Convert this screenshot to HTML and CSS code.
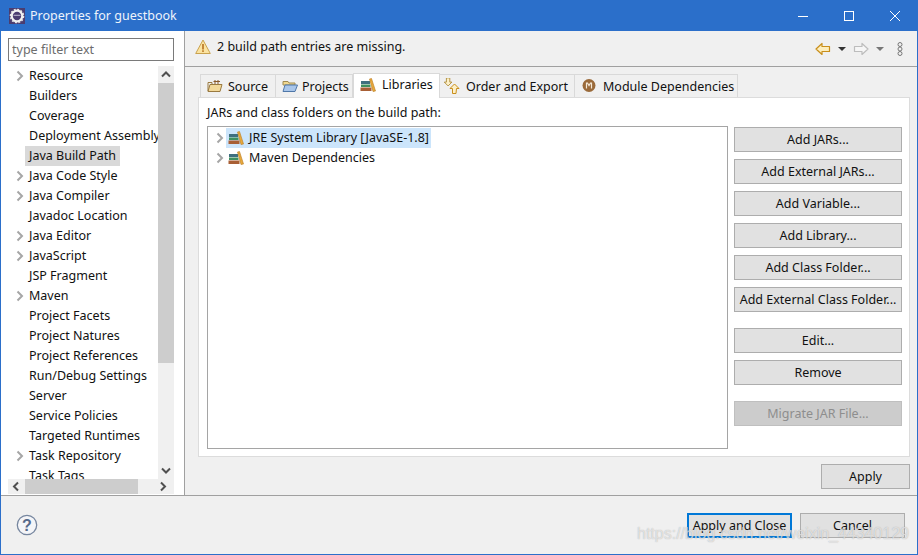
FILE: index.html
```html
<!DOCTYPE html>
<html>
<head>
<meta charset="utf-8">
<title>Properties for guestbook</title>
<link rel="stylesheet" href="styles.css">
</head>
<body>
<svg class="defs" width="0" height="0">
  <symbol id="lib" viewBox="0 0 16 16">
    <rect x="1" y="4" width="9" height="3" fill="#3f6f7f"/>
    <rect x="1" y="7.500" width="9.500" height="2.500" fill="#3f8f5f"/>
    <rect x="0.5" y="10.500" width="11" height="3.500" fill="#a85f35"/>
    <path d="M9.500 2 L11.500 1.500 L15.500 14 L13 14.500 Z" fill="#e8a93c" stroke="#b97a20" stroke-width=".6"/>
  </symbol>
  <symbol id="chev" viewBox="0 0 8 12">
    <path d="M1.500 1.500 L6 6 L1.500 10.500" fill="none" stroke="#a6a6a6" stroke-width="2"/>
  </symbol>
</svg>
<div class="window">
  <header class="titlebar">
    <svg class="appicon" viewBox="0 0 16 16" width="16" height="16">
      <rect width="16" height="16" fill="#4a3d70"/>
      <circle cx="8" cy="8" r="5.300" fill="none" stroke="#f2f2f2" stroke-width="2.200"/>
      <circle cx="8" cy="8" r="6.600" fill="none" stroke="#e8e8e8" stroke-width="1.400" stroke-dasharray="2 1.450"/>
      <rect x="4.500" y="6.800" width="7" height="1" fill="#bfb8d0"/>
    </svg>
    <span class="title">Properties for guestbook</span>
    <div class="winctrls">
      <svg viewBox="0 0 46 30" width="46" height="30"><path d="M18 15.500 H28" stroke="#fff" stroke-width="1"/></svg>
      <svg viewBox="0 0 46 30" width="46" height="30"><rect x="18.500" y="10.500" width="9" height="9" fill="none" stroke="#fff"/></svg>
      <svg viewBox="0 0 46 30" width="46" height="30"><path d="M18 10 L28 20 M28 10 L18 20" stroke="#fff" stroke-width="1"/></svg>
    </div>
  </header>

  <div class="main">
    <aside class="sidebar">
      <input class="filter" type="text" placeholder="type filter text">
      <div class="treegrid">
        <ul class="navtree">
          <li><svg class="chev"><use href="#chev"/></svg><span>Resource</span></li>
          <li class="leaf"><span>Builders</span></li>
          <li class="leaf"><span>Coverage</span></li>
          <li class="leaf"><span>Deployment Assembly</span></li>
          <li class="leaf selected"><span>Java Build Path</span></li>
          <li><svg class="chev"><use href="#chev"/></svg><span>Java Code Style</span></li>
          <li><svg class="chev"><use href="#chev"/></svg><span>Java Compiler</span></li>
          <li class="leaf"><span>Javadoc Location</span></li>
          <li><svg class="chev"><use href="#chev"/></svg><span>Java Editor</span></li>
          <li><svg class="chev"><use href="#chev"/></svg><span>JavaScript</span></li>
          <li class="leaf"><span>JSP Fragment</span></li>
          <li><svg class="chev"><use href="#chev"/></svg><span>Maven</span></li>
          <li class="leaf"><span>Project Facets</span></li>
          <li class="leaf"><span>Project Natures</span></li>
          <li class="leaf"><span>Project References</span></li>
          <li class="leaf"><span>Run/Debug Settings</span></li>
          <li class="leaf"><span>Server</span></li>
          <li class="leaf"><span>Service Policies</span></li>
          <li class="leaf"><span>Targeted Runtimes</span></li>
          <li><svg class="chev"><use href="#chev"/></svg><span>Task Repository</span></li>
          <li class="leaf"><span>Task Tags</span></li>
        </ul>
        <div class="vscroll">
          <svg class="arrow" viewBox="0 0 16 17" width="16" height="17"><path d="M4 10.500 L8 6.500 L12 10.500" fill="none" stroke="#505050" stroke-width="2"/></svg>
          <div class="vthumb"></div>
          <div class="grow"></div>
          <svg class="arrow" viewBox="0 0 16 17" width="16" height="17"><path d="M4 6.500 L8 10.500 L12 6.500" fill="none" stroke="#505050" stroke-width="2"/></svg>
        </div>
        <div class="hscroll">
          <svg class="arrow" viewBox="0 0 17 15" width="17" height="15"><path d="M10 3.500 L6 7.500 L10 11.500" fill="none" stroke="#505050" stroke-width="2"/></svg>
          <div class="hthumb"></div>
          <div class="grow"></div>
          <svg class="arrow" viewBox="0 0 20 15" width="20" height="15"><path d="M7 3.500 L11 7.500 L7 11.500" fill="none" stroke="#505050" stroke-width="2"/></svg>
        </div>
      </div>
    </aside>

    <section class="content">
      <div class="msgbar">
        <svg class="warn" viewBox="0 0 16 16" width="16" height="16">
          <path d="M8 1 L15.300 14.500 H.7 Z" fill="#fbe3a0" stroke="#c9a24f" stroke-linejoin="round"/>
          <rect x="7.200" y="5" width="1.600" height="5.500" fill="#b5701e"/>
          <rect x="7.200" y="11.300" width="1.600" height="1.600" fill="#b5701e"/>
        </svg>
        <span class="msg">2 build path entries are missing.</span>
        <div class="navtools">
          <svg viewBox="0 0 16 14" width="16" height="14"><path d="M1 7 L7 1.500 V4.500 H14.500 V9.500 H7 V12.500 Z" fill="#fdeebd" stroke="#c98f1c" stroke-width="1.200" stroke-linejoin="round"/></svg>
          <svg class="drop" viewBox="0 0 8 4" width="8" height="4"><path d="M0 0 H8 L4 4 Z" fill="#333"/></svg>
          <svg viewBox="0 0 16 14" width="16" height="14"><path d="M15 7 L9 1.500 V4.500 H1.500 V9.500 H9 V12.500 Z" fill="#f6f6f6" stroke="#bdbdbd" stroke-width="1.200" stroke-linejoin="round"/></svg>
          <svg class="drop" viewBox="0 0 8 4" width="8" height="4"><path d="M0 0 H8 L4 4 Z" fill="#777"/></svg>
          <svg class="kebab" viewBox="0 0 6 14" width="6" height="14"><circle cx="3" cy="2.500" r="2" fill="none" stroke="#777"/><circle cx="3" cy="7" r="2" fill="none" stroke="#777"/><circle cx="3" cy="11.500" r="2" fill="none" stroke="#777"/></svg>
        </div>
      </div>

      <div class="pagebody">
        <nav class="tabs">
          <div class="tab t-source">
            <svg viewBox="0 0 16 16" width="16" height="16"><path d="M1 13.500 L3 6.500 H15 L13 13.500 Z" fill="#f3d99a" stroke="#9a7a40"/><path d="M1 13 V4.500 H5 V6" fill="none" stroke="#9a7a40"/><path d="M8 2 V6 M11 2 V6 M6.500 3.500 H13" stroke="#8a5a2a" fill="none"/></svg>
            <span>Source</span>
          </div>
          <div class="tab t-projects">
            <svg viewBox="0 0 16 16" width="16" height="16"><path d="M1 3.500 H6 L7 5 H13 V7 H1 Z" fill="#f0d890" stroke="#a08a50"/><path d="M1 13.500 L3 7 H15.500 L13 13.500 Z" fill="#a9c6ea" stroke="#4f77a8"/></svg>
            <span>Projects</span>
          </div>
          <div class="tab active t-libs">
            <svg viewBox="0 0 16 16" width="16" height="16"><use href="#lib"/></svg>
            <span>Libraries</span>
          </div>
          <div class="tab t-order">
            <svg viewBox="0 0 16 16" width="16" height="16"><path d="M4 1 H8 V6 H10.500 L6 10.500 1.500 6 H4 Z" fill="#fdf0c8" stroke="#a9852f" transform="translate(-1 -1) scale(.85)"/><path d="M12 15.500 H8.500 V10.500 H6 L10.500 6 15 10.500 H12.500 Z" fill="#fdf0c8" stroke="#c98f1c"/></svg>
            <span>Order and Export</span>
          </div>
          <div class="tab t-module">
            <svg viewBox="0 0 16 16" width="16" height="16"><circle cx="8" cy="7.500" r="6.500" fill="#9a6a3a"/><path d="M5.500 10.500 V5 H6.500 L8 7.500 9.500 5 H10.500 V10.500" fill="none" stroke="#f3e8d8" stroke-width="1.200"/></svg>
            <span>Module Dependencies</span>
          </div>
        </nav>
        <div class="panel">
          <div class="panel-label">JARs and class folders on the build path:</div>
          <div class="panel-row">
            <div class="libtree">
              <div class="librow">
                <svg class="chev"><use href="#chev"/></svg>
                <div class="libitem selected">
                  <svg viewBox="0 0 16 16" width="16" height="16"><use href="#lib"/></svg>
                  <span>JRE System Library [JavaSE-1.8]</span>
                </div>
              </div>
              <div class="librow">
                <svg class="chev"><use href="#chev"/></svg>
                <div class="libitem">
                  <svg viewBox="0 0 16 16" width="16" height="16"><use href="#lib"/></svg>
                  <span>Maven Dependencies</span>
                </div>
              </div>
            </div>
            <div class="btncol">
              <button class="btn">Add JARs...</button>
              <button class="btn">Add External JARs...</button>
              <button class="btn">Add Variable...</button>
              <button class="btn">Add Library...</button>
              <button class="btn">Add Class Folder...</button>
              <button class="btn">Add External Class Folder...</button>
              <button class="btn sep">Edit...</button>
              <button class="btn">Remove</button>
              <button class="btn sep disabled">Migrate JAR File...</button>
            </div>
          </div>
        </div>
        <div class="applyrow"><button class="btn apply">Apply</button></div>
      </div>
    </section>
  </div>

  <footer class="footer">
    <svg class="help" viewBox="0 0 22 22" width="22" height="22">
      <circle cx="11" cy="11" r="9.700" fill="#f4f5f8" stroke="#76869f" stroke-width="1.300"/>
      <text x="11" y="16.500" text-anchor="middle" class="helpq">?</text>
    </svg>
    <div class="footbtns">
      <button class="btn default">Apply and Close</button>
      <button class="btn cancel">Cancel</button>
    </div>
  </footer>
  <div class="watermark">https://blog.csdn.net/weixin_44340129</div>
</div>
</body>
</html>
```

FILE: styles.css
```css
* { box-sizing: border-box; }
html, body { margin: 0; padding: 0; }
body { width: 918px; height: 555px; overflow: hidden; font-family: "Noto Sans", "Open Sans", sans-serif; font-size: 12.5px; color: #111; }
.defs { position: absolute; }
.window { position: relative; width: 918px; height: 555px; display: flex; flex-direction: column; border: 1px solid #2b6fca; border-top: 0; background: #f0f0f0; }
.titlebar { height: 31px; margin: 0 -1px; padding-left: 9px; display: flex; align-items: center; background: #2b6fca; color: #fff; flex: none; }
.appicon { flex: none; }
.title { margin-left: 5px; font-size: 12.5px; color: #eef3fb; }
.winctrls { margin-left: auto; display: flex; }
.main { flex: 1; min-height: 0; display: flex; border-bottom: 1px solid #a0a0a0; }
.sidebar { width: 184px; flex: none; background: #fff; border-right: 1px solid #a0a0a0; padding: 7px 0 0 7px; }
.filter { display: block; width: 166px; height: 23px; border: 1px solid #7a7a7a; padding: 0 3px; font: inherit; color: #666; outline: 0; background: #fff; }
.filter::placeholder { color: #6d6d6d; opacity: 1; }
.treegrid { margin-top: 5px; display: grid; grid-template-columns: 150px 16px; grid-template-rows: 413px 15px; }
.navtree { margin: 0; padding: 0; list-style: none; overflow: hidden; }
.navtree li { height: 20px; display: flex; align-items: center; white-space: nowrap; }
.navtree .chev { margin-right: 1px; }
.chev { width: 8px; height: 12px; margin-left: 8px; flex: none; }
.navtree .leaf { padding-left: 17px; }
.navtree li span { padding: 0 4px; line-height: 20px; position: relative; top: -0.5px; }
.navtree .selected span { background: #d9d9d9; top: 0; }
.vscroll { display: flex; flex-direction: column; background: #f0f0f0; }
.vthumb { height: 280px; background: #cdcdcd; }
.grow { flex: 1; }
.arrow { flex: none; display: block; }
.hscroll { display: flex; background: #f0f0f0; grid-column: 1 / 3; }
.hthumb { width: 113px; background: #cdcdcd; }
.content { flex: 1; min-width: 0; display: flex; flex-direction: column; }
.msgbar { height: 36px; flex: none; border-bottom: 1px solid #a0a0a0; display: flex; align-items: center; padding-left: 10px; }
.msg { margin-left: 6px; position: relative; top: -2px; }
.warn { position: relative; top: -2px; }
.navtools { margin-left: auto; margin-right: 14px; display: flex; align-items: center; gap: 7px; }
.kebab { margin-left: 6px; }
.pagebody { flex: 1; min-height: 0; padding: 6px 7px 0 13px; display: flex; flex-direction: column; }
.tabs { display: flex; align-items: flex-end; height: 24px; flex: none; position: relative; margin-left: 2px; z-index: 1; }
.tab { height: 23px; display: flex; align-items: center; gap: 5px; padding-left: 6px; background: #f0f0f0; border: 1px solid #d9d9d9; border-bottom: 0; border-left-width: 0; white-space: nowrap; }
.t-source { width: 76px; border-left-width: 1px; }
.t-projects { width: 77px; gap: 4px; }
.t-libs { width: 87px; gap: 6px; }
.t-order { width: 135px; gap: 6px; padding-left: 4px; }
.t-module { width: 163px; gap: 6px; padding-left: 6px; }
.tab.active { height: 25px; margin-bottom: -1px; background: #fff; border-left-width: 1px; padding-bottom: 3px; }
.panel { height: 360px; flex: none; background: #fff; border: 1px solid #dcdcdc; padding: 5px 8px 0 8px; }
.panel-label { height: 23px; line-height: 20px; }
.panel-row { display: flex; gap: 6px; }
.libtree { width: 521px; height: 323px; border: 1px solid #a5a5a5; padding-top: 1px; flex: none; }
.librow { height: 20px; display: flex; align-items: center; }
.librow .chev { margin-left: 8px; margin-right: 2px; }
.libitem { height: 20px; display: flex; align-items: center; gap: 5px; padding: 0 2px; }
.libitem span { position: relative; top: -1px; }
.libitem.selected { background: #cce5fb; }
.btncol { width: 168px; display: flex; flex-direction: column; gap: 7px; flex: none; }
.btn { width: 100%; height: 25px; flex: none; padding: 0; border: 1px solid #adadad; background: #e1e1e1; font: inherit; color: #111; text-align: center; }
.btncol .btn:first-child { margin-top: 1px; }
.btn.sep { margin-top: 9px; }
.btn.disabled { background: #cccccc; color: #8e8e8e; border-color: #bfbfbf; }
.applyrow { display: flex; justify-content: flex-end; padding-top: 7px; }
.apply { width: 89px; }
.footer { height: 58px; flex: none; display: flex; align-items: center; padding: 0 12px 0 15px; }
.help { flex: none; }
.helpq { font-family: "Liberation Sans", sans-serif; font-size: 16px; font-weight: 700; fill: #56698a; }
.footbtns { margin-left: auto; display: flex; gap: 8px; }
.footbtns .btn { width: 105px; height: 25px; }
.footbtns .default { border: 2px solid #0078d7; }
.watermark { position: absolute; left: 636px; top: 525px; font-family: "Liberation Sans", sans-serif; font-size: 16px; color: rgba(255, 255, 255, .6); text-shadow: 0 0 1px rgba(120, 120, 120, .6); white-space: nowrap; }
```
